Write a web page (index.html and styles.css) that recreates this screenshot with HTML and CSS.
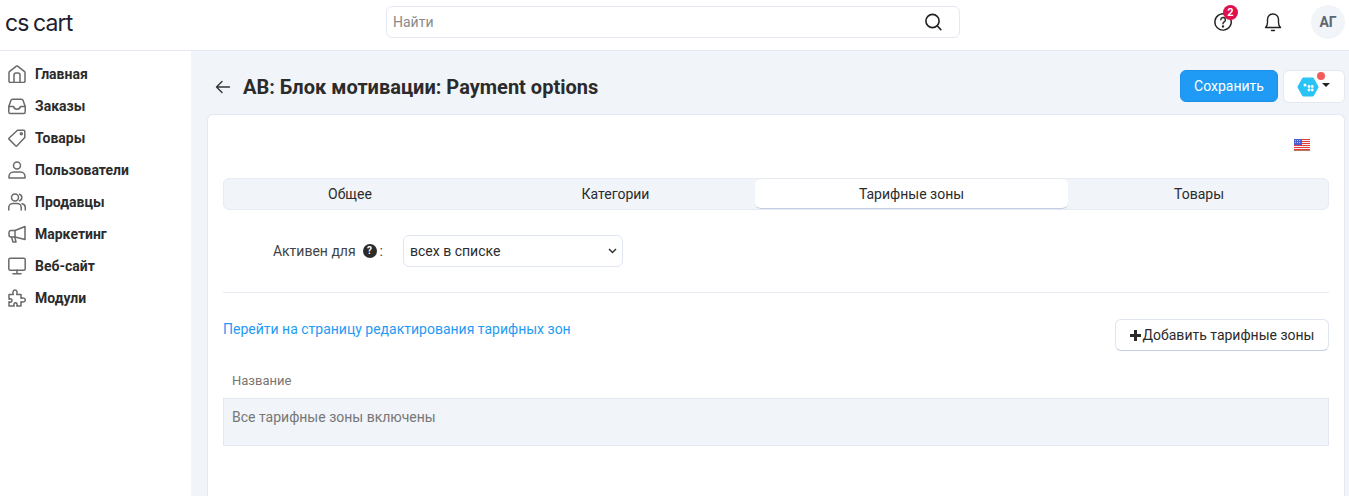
FILE: index.html
```html
<!DOCTYPE html>
<html lang="ru">
<head>
  <meta charset="UTF-8">
  <title>AB: Блок мотивации: Payment options</title>
  <link rel="stylesheet" href="styles.css">
</head>
<body>
<header class="topbar">
  <div class="logo">cs cart</div>
  <div class="search">
    <input class="search-input" type="text" placeholder="Найти">
    <svg class="search-icon" width="20" height="20" viewBox="0 0 20 20" fill="none" stroke="#222" stroke-width="1.6" stroke-linecap="round"><circle cx="9.5" cy="9" r="6.6"/><path d="M14.4 14l3.4 3.6"/></svg>
  </div>
  <div class="top-actions">
    <div class="help">
      <svg width="20" height="20" viewBox="0 0 20 20" fill="none" stroke="#222" stroke-width="1.4" stroke-linecap="round"><path d="M12.5 2.1A8.2 8.2 0 1 0 17.9 7.5"/><path d="M7.8 7.8a2.3 2.3 0 1 1 3.4 2c-.8.5-1.2 1-1.2 1.9"/><circle cx="10" cy="14.4" r=".5" fill="#222"/></svg>
      <span class="badge">2</span>
    </div>
    <svg class="bell" width="20" height="22" viewBox="0 0 20 22" fill="none" stroke="#222" stroke-width="1.4" stroke-linecap="round" stroke-linejoin="round"><path d="M2.5 16.5c1.3-1.2 2-2.6 2-5V8.500a5.500 5.500 0 0 1 11 0v3c0 2.400.7 3.800 2 5z"/><path d="M8.500 19.500h3"/></svg>
    <div class="avatar">АГ</div>
  </div>
</header>

<div class="layout">
  <nav class="sidebar">
    <a class="nav-item"><svg viewBox="0 0 18 18"><path d="M1 7.500a1 1 0 0 1 .4-.8L8.400 1.200a1 1 0 0 1 1.200 0l7 5.500a1 1 0 0 1 .4.800V16a1.500 1.500 0 0 1-1.500 1.500h-13A1.500 1.500 0 0 1 1 16z"/><path d="M6 17.500V10a2 2 0 0 1 2-2h2a2 2 0 0 1 2 2v7.500"/></svg>Главная</a>
    <a class="nav-item"><svg viewBox="0 0 18 18"><path d="M.8 9.500L3 3.200a1.500 1.500 0 0 1 1.400-1h9.200a1.500 1.500 0 0 1 1.400 1l2.200 6.300V15a1.500 1.500 0 0 1-1.500 1.500H2.300A1.500 1.500 0 0 1 .8 15z"/><path d="M.8 9.500h4.700c.5 1.700 1.700 2.700 3.500 2.700s3-1 3.500-2.700h4.700"/></svg>Заказы</a>
    <a class="nav-item"><svg viewBox="0 0 18 18"><path d="M9.500 1.200h6.300a1 1 0 0 1 1 1v6.300L9 16.800a1 1 0 0 1-1.400 0L1.200 10.400a1 1 0 0 1 0-1.400z"/><circle cx="13.300" cy="4.700" r="1"/></svg>Товары</a>
    <a class="nav-item"><svg viewBox="0 0 18 18"><circle cx="9" cy="4.500" r="3.500"/><path d="M1 17v-1.500C1 13 3 11 5.500 11h7c2.500 0 4.500 2 4.500 4.500V17z"/></svg>Пользователи</a>
    <a class="nav-item"><svg viewBox="0 0 18 18"><circle cx="7" cy="4.500" r="3.500"/><path d="M.8 17v-2.500C.8 12 2.800 10.500 5 10.500h4c2.200 0 4.200 1.500 4.200 4V17"/><path d="M11.500 1.200a3.500 3.500 0 0 1 0 6.600"/><path d="M14 10.700c2 .4 3.300 1.900 3.300 3.800V17"/></svg>Продавцы</a>
    <a class="nav-item"><svg viewBox="0 0 18 18"><path d="M17 1.500v13L7 12H3a2 2 0 0 1-2-2V7.500a2 2 0 0 1 2-2h4z"/><path d="M7 5.500V12"/><path d="M3.500 12l1.500 5h3l-1.200-5"/></svg>Маркетинг</a>
    <a class="nav-item"><svg viewBox="0 0 18 18"><rect x=".8" y="1.200" width="16.400" height="12" rx="1.500"/><path d="M9 13.200v3.600M5 16.800h8"/></svg>Веб-сайт</a>
    <a class="nav-item"><svg viewBox="0 0 18 18"><path d="M1 5.500h4.300C4.500 3.500 5 1 7 1s2.500 2.500 1.700 4.500H13v3.800c2-.8 4.300-.3 4.300 1.700S15 13.500 13 12.700v4.300H8.800c.7-1.800.2-3.200-1.300-3.200S5.500 15.200 6.200 17H1v-4.200c1.500.7 3 .3 3-1.300s-1.500-2-3-1.300z"/></svg>Модули</a>
  </nav>

  <main class="content">
    <div class="page-head">
      <svg class="back" width="16" height="14" viewBox="0 0 16 14" fill="none" stroke="#333" stroke-width="1.400" stroke-linecap="round" stroke-linejoin="round"><path d="M14.500 7H1.500M7 1.500L1.500 7 7 12.500"/></svg>
      <h1 class="page-title">AB: Блок мотивации: Payment options</h1>
      <button class="btn-save">Сохранить</button>
      <div class="addon-btn">
        <span class="hex"><svg width="22" height="20" viewBox="0 0 22 20"><path d="M6.500 2h9l4.500 8-4.500 8h-9L2 10z" fill="#29c3f5" stroke="#29c3f5" stroke-width="3" stroke-linejoin="round"/><g fill="#fff"><circle cx="8" cy="8" r="1.500"/><circle cx="12" cy="9.500" r="1.400"/><circle cx="15.300" cy="9.500" r="1.400"/><circle cx="12" cy="13" r="1.400"/><circle cx="15.300" cy="13" r="1.400"/></g></svg><i class="dot"></i></span>
        <span class="caret"></span>
      </div>
    </div>

    <section class="card">
      <div class="lang-row">
        <svg width="16" height="12" viewBox="0 0 16 12"><rect width="16" height="12" fill="#f2f2f8"/><g fill="#e23c3c"><rect y="0" width="16" height="1"/><rect y="2" width="16" height="1"/><rect y="4" width="16" height="1"/><rect y="6" width="16" height="1"/><rect y="8" width="16" height="1"/><rect y="10" width="16" height="1"/></g><rect y="11" width="16" height="1" fill="#b57a5c"/><rect width="8" height="6" fill="#4a5fd0"/><path d="M1 1.500h6M1 3.500h6" stroke="#dfe4ff" stroke-width=".7" stroke-dasharray="1 1"/></svg>
      </div>

      <div class="tabs">
        <div class="tab tab-1">Общее</div>
        <div class="tab tab-2">Категории</div>
        <div class="tab tab-3 active">Тарифные зоны</div>
        <div class="tab tab-4">Товары</div>
      </div>

      <div class="field">
        <label class="field-label">Активен для <span class="q">?</span>:</label>
        <div class="select"><span>всех в списке</span>
          <svg width="9" height="6" viewBox="0 0 9 6" fill="none" stroke="#333" stroke-width="1.500"><path d="M1 1l3.500 3.500L8 1"/></svg>
        </div>
      </div>

      <div class="link-row">
        <a class="link">Перейти на страницу редактирования тарифных зон</a>
        <button class="btn-add"><span class="plus"></span>Добавить тарифные зоны</button>
      </div>

      <div class="table-head">Название</div>
      <div class="table-empty">Все тарифные зоны включены</div>
    </section>
  </main>
</div>
</body>
</html>
```

FILE: styles.css
```css
* {
  box-sizing: border-box;
}
html, body {
  height: 100%;
}
body {
  margin: 0;
  height: 496px;
  overflow: hidden;
  font-family: Roboto, "Liberation Sans", sans-serif;
  font-size: 14px;
  color: #2b2b2b;
  background-color: #f1f4f9;
}

/* top bar */
.topbar {
  height: 51px;
  background-color: #fff;
  border-bottom: 1px solid #e3e8f2;
  display: flex;
  align-items: center;
}
.logo {
  width: 386px;
  padding-left: 5px;
  padding-bottom: 5px;
  font-family: Inter, sans-serif;
  font-size: 23px;
  font-weight: 400;
  letter-spacing: -0.9px;
  word-spacing: -1px;
  color: #1c2030;
}
.search {
  width: 574px;
  height: 32px;
  margin-top: -6px;
  border: 1px solid #e3e8f2;
  border-radius: 6px;
  display: flex;
  align-items: center;
  padding: 0 16px 0 6px;
}
.search-input {
  flex: 1;
  border: none;
  outline: none;
  font-family: inherit;
  font-size: 14px;
  padding: 0;
}
.search-input::placeholder {
  color: #8a8a8a;
}
.top-actions {
  margin-left: auto;
  display: flex;
  align-items: center;
  padding-right: 4px;
  margin-top: -6px;
}
.help {
  position: relative;
  width: 20px;
  height: 20px;
  margin-right: 30px;
}
.badge {
  position: absolute;
  top: -7px;
  left: 10px;
  width: 15px;
  height: 15px;
  border-radius: 50%;
  background-color: #e0104f;
  color: #fff;
  font-size: 11px;
  font-weight: 700;
  line-height: 15px;
  text-align: center;
}
.bell {
  margin-right: 28px;
}
.avatar {
  width: 34px;
  height: 34px;
  border-radius: 50%;
  background-color: #f1f4f9;
  color: #5f6670;
  font-size: 14px;
  font-weight: 700;
  line-height: 34px;
  text-align: center;
}

/* sidebar */
.layout {
  display: flex;
  height: 445px;
}
.sidebar {
  width: 191px;
  flex-shrink: 0;
  background-color: #fff;
  padding-top: 7px;
}
.nav-item {
  display: flex;
  align-items: center;
  height: 32px;
  padding-left: 8px;
  font-weight: 700;
  font-size: 14px;
  color: #2b2b2b;
}
.nav-item svg {
  width: 18px;
  height: 18px;
  margin-right: 9px;
  fill: none;
  stroke: #6a6a6a;
  stroke-width: 1.500;
  stroke-linejoin: round;
  stroke-linecap: round;
}

/* content */
.content {
  flex: 1;
  padding: 0 4px 0 16px;
  min-width: 0;
}
.page-head {
  height: 63px;
  display: flex;
  align-items: center;
  padding-top: 8px;
}
.back {
  margin-left: 8px;
  margin-right: 12px;
}
.page-title {
  margin: 0;
  font-size: 20px;
  font-weight: 700;
  color: #2b2b2b;
  flex: 1;
}
.btn-save {
  width: 98px;
  height: 32px;
  margin: -1px 5px 0 0;
  border: 1px solid #1a90e8;
  border-radius: 6px;
  background-color: #1f9bf5;
  color: #fff;
  font-family: inherit;
  font-size: 14px;
  padding: 0;
}
.addon-btn {
  width: 62px;
  height: 33px;
  border: 1px solid #e3e8f2;
  border-radius: 6px;
  background-color: #fff;
  display: flex;
  align-items: center;
  padding-left: 13px;
  gap: 3px;
}
.hex {
  position: relative;
  display: block;
  width: 22px;
  height: 20px;
}
.dot {
  position: absolute;
  top: -5px;
  left: 20px;
  width: 8px;
  height: 8px;
  border-radius: 50%;
  background-color: #f25c5c;
}
.caret {
  width: 0;
  height: 0;
  border-left: 4px solid transparent;
  border-right: 4px solid transparent;
  border-top: 4px solid #222;
  margin-top: -3px;
}

.card {
  background-color: #fff;
  border: 1px solid #e3e8f2;
  border-bottom: none;
  border-radius: 6px 6px 0 0;
  height: 382px;
  padding: 0 15px;
}
.lang-row {
  height: 63px;
  display: flex;
  justify-content: flex-end;
  align-items: flex-start;
  padding: 24px 19px 0 0;
}
.tabs {
  height: 32px;
  display: flex;
  background-color: #f1f4f9;
  border-radius: 6px;
  border: 1px solid #e6ebf4;
}
.tab {
  display: flex;
  align-items: center;
  justify-content: center;
  font-size: 14px;
  color: #2b2b2b;
}
.tab-1 {
  width: 252px;
}
.tab-2 {
  width: 279px;
}
.tab-3 {
  width: 313px;
}
.tab-4 {
  flex: 1;
  padding-left: 2px;
}
.tab.active {
  background-color: #fff;
  border-radius: 6px;
  border-bottom: 1px solid #c3cee2;
}

.field {
  display: flex;
  align-items: center;
  height: 83px;
  border-bottom: 1px solid #e8ebf2;
  margin-bottom: 26px;
}
.field-label {
  width: 160px;
  display: flex;
  justify-content: flex-end;
  align-items: center;
  color: #444;
}
.q {
  display: inline-block;
  width: 14px;
  height: 14px;
  margin: 0 3px 0 7px;
  border-radius: 50%;
  background-color: #2b2b2b;
  color: #fff;
  font-size: 10px;
  font-weight: 700;
  line-height: 14px;
  text-align: center;
}
.select {
  width: 220px;
  height: 32px;
  margin-left: 20px;
  border: 1px solid #e0e6f1;
  border-radius: 6px;
  display: flex;
  align-items: center;
  justify-content: space-between;
  padding: 0 5px 0 6px;
  color: #2b2b2b;
}

.link-row {
  display: flex;
  justify-content: space-between;
  align-items: flex-start;
  height: 54px;
}
.link {
  color: #1f9bf5;
  font-size: 14px;
  line-height: 20px;
}
.btn-add {
  width: 214px;
  height: 32px;
  background-color: #fff;
  border: 1px solid #dfe5f1;
  border-bottom-color: #c3cee2;
  border-radius: 6px;
  font-family: inherit;
  font-size: 14px;
  color: #2b2b2b;
  padding: 0;
  display: flex;
  align-items: center;
  justify-content: center;
}
.plus {
  display: inline-block;
  width: 11px;
  height: 11px;
  margin-right: 2px;
  background:
    linear-gradient(#2b2b2b, #2b2b2b) center / 11px 3px no-repeat,
    linear-gradient(#2b2b2b, #2b2b2b) center / 3px 11px no-repeat;
}
.table-head {
  height: 25px;
  padding-left: 9px;
  font-size: 13px;
  line-height: 15px;
  color: #7b7570;
}
.table-empty {
  height: 48px;
  background-color: #f1f4f9;
  border: 1px solid #e3e8f2;
  padding: 10px 8px;
  color: #777;
  font-size: 14px;
  line-height: 16px;
}
```
